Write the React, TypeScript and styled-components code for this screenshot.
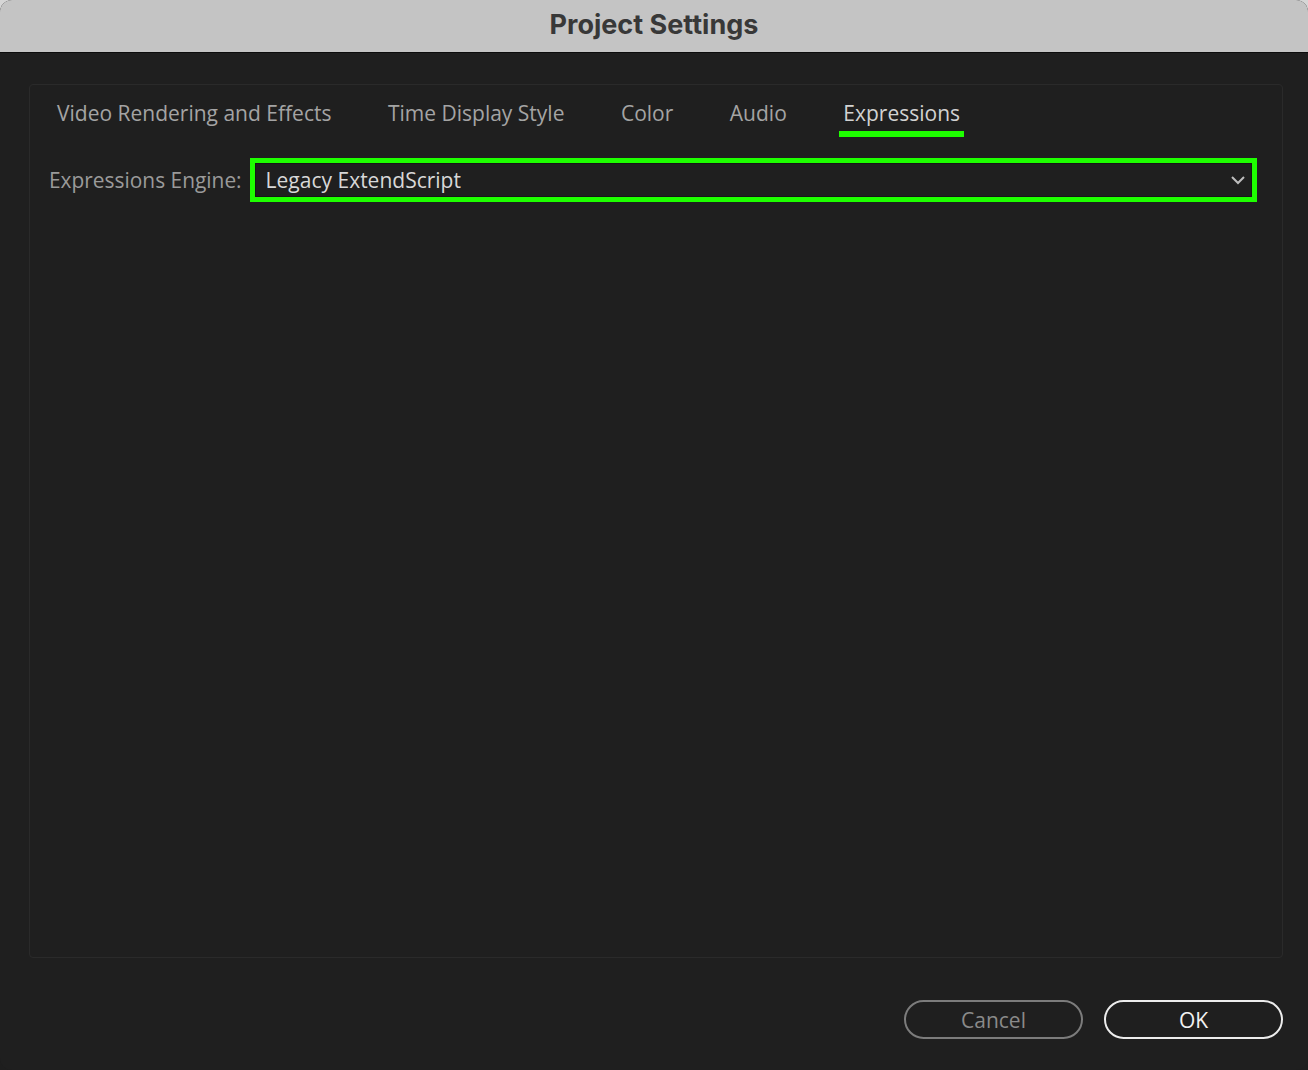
import React from "react";
import styled, { createGlobalStyle } from "styled-components";

const Global = createGlobalStyle`
  html, body {
    margin: 0;
    padding: 0;
    background: linear-gradient(#d6d6d6 0 50%, #1e1e1e 50% 100%);
  }
  #root { width: 1308px; height: 1070px; }
`;

const GREEN = "#1eff00";

const Window = styled.div`
  width: 1308px;
  height: 1070px;
  display: flex;
  flex-direction: column;
  background: #1f1f1f;
  border-radius: 12px;
  overflow: hidden;
  font-family: "Open Sans", "Noto Sans", sans-serif;
`;

const TitleBar = styled.div`
  height: 53px;
  flex: none;
  box-sizing: border-box;
  padding-bottom: 3px;
  background: #c4c4c4;
  border-bottom: 1px solid #0c0c0c;
  display: flex;
  align-items: center;
  justify-content: center;
`;

const Title = styled.h1`
  margin: 0;
  font-family: Inter, "Liberation Sans", sans-serif;
  font-weight: 700;
  font-size: 27px;
  color: #383838;
`;

const Body = styled.div`
  flex: 1;
  display: flex;
  flex-direction: column;
  padding: 31px 25px 31px 29px;
`;

const Panel = styled.div`
  flex: 1;
  border: 1px solid #2a2a2a;
  border-radius: 4px;
  display: flex;
  flex-direction: column;
`;

const Tabs = styled.div`
  display: flex;
  gap: 48.5px;
  padding: 13px 0 0 23px;
`;

const Tab = styled.div<{ $active?: boolean }>`
  padding: 0 4px 3px;
  font-size: 21px;
  line-height: 30px;
  color: ${(p) => (p.$active ? "#d2d2d2" : "#a4a4a4")};
  border-bottom: 6px solid ${(p) => (p.$active ? GREEN : "transparent")};
`;

const Row = styled.div`
  display: flex;
  align-items: center;
  gap: 8px;
  margin: 21px 25px 0 19px;
`;

const Label = styled.span`
  font-size: 20.9px;
  color: #9a9a9a;
  white-space: nowrap;
`;

const Select = styled.div`
  flex: 1;
  height: 44px;
  box-sizing: border-box;
  border: 5px solid ${GREEN};
  display: flex;
`;

const SelectInner = styled.div`
  flex: 1;
  border: 1px solid #161616;
  display: flex;
  align-items: center;
  justify-content: space-between;
  padding: 0 5px 0 10px;
  font-size: 21px;
  color: #d8d8d8;
`;

const Footer = styled.div`
  display: flex;
  justify-content: flex-end;
  gap: 21px;
  margin-top: 42px;
`;

const Button = styled.button<{ $primary?: boolean }>`
  width: 179px;
  height: 39px;
  border-radius: 20px;
  background: transparent;
  border: 2.5px solid ${(p) => (p.$primary ? "#ececec" : "#7c7c7c")};
  color: ${(p) => (p.$primary ? "#f2f2f2" : "#8a8a8a")};
  font-family: "Open Sans", "Noto Sans", sans-serif;
  font-size: 21px;
  padding: 0;
  display: flex;
  align-items: center;
  justify-content: center;
`;

const Chevron = () => (
  <svg width="16" height="10" viewBox="0 0 16 10">
    <path d="M2 2 L8 8 L14 2" fill="none" stroke="#bdbdbd" strokeWidth="2" />
  </svg>
);

const tabs = [
  "Video Rendering and Effects",
  "Time Display Style",
  "Color",
  "Audio",
  "Expressions",
];

export default function App() {
  return (
    <>
      <Global />
      <Window>
        <TitleBar>
          <Title>Project Settings</Title>
        </TitleBar>
        <Body>
          <Panel>
            <Tabs>
              {tabs.map((t) => (
                <Tab key={t} $active={t === "Expressions"}>
                  {t}
                </Tab>
              ))}
            </Tabs>
            <Row>
              <Label>Expressions Engine:</Label>
              <Select>
                <SelectInner>
                  <span>Legacy ExtendScript</span>
                  <Chevron />
                </SelectInner>
              </Select>
            </Row>
          </Panel>
          <Footer>
            <Button>Cancel</Button>
            <Button $primary>OK</Button>
          </Footer>
        </Body>
      </Window>
    </>
  );
}
